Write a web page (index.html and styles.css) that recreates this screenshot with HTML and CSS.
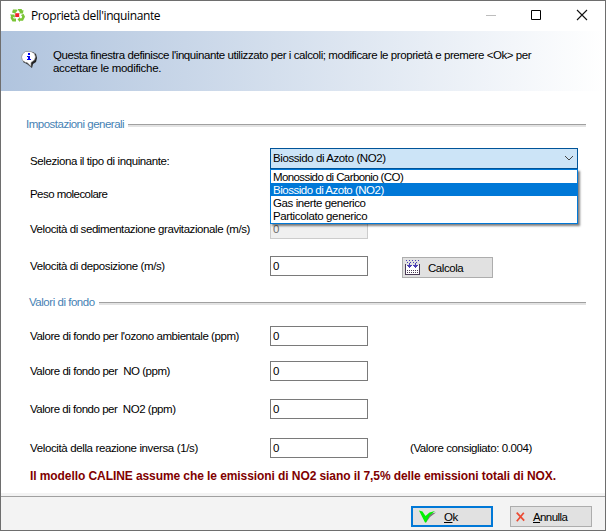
FILE: index.html
```html
<!DOCTYPE html>
<html lang="it">
<head>
<meta charset="utf-8">
<title>Proprietà dell'inquinante</title>
<link rel="stylesheet" href="styles.css">
</head>
<body>
<div class="window">
  <header class="titlebar">
    <svg class="app-icon" width="15" height="13" viewBox="0 0 15 13">
      <g fill="#7ac536">
        <path d="M3 .5h3.500l1 1-2.500 3-3-1zM7.500 0h4l1 1.500 1-.5-.5 3.500h-4l1-1-1.500-2z"/>
        <path d="M0 5.500h4.500l.5 3-1.500-.5-.5 1 1 .5h2v3h-3.500l-2-3.500.5-2z"/>
        <path d="M11 6l2.500-1.200 1.500 3-2 4h-3v1.200l-2.500-2.500 2.500-2.500v1.200h1.500l.7-1.500z"/>
      </g>
      <path fill="#f0222c" d="M5.200 4.200h4v3.800h-4z"/>
    </svg>
    <span class="title">Proprietà dell'inquinante</span>
    <svg class="win-controls" width="104" height="12" viewBox="0 0 104 12" fill="none">
      <path stroke="#bdbdbd" d="M0 6.500h10"/>
      <path stroke="#000" d="M45.500 1.500h9v9h-9z"/>
      <path stroke="#111" stroke-width="1.100" d="M91 1l10 10M101 1l-10 10"/>
    </svg>
  </header>
  <section class="banner">
    <svg class="info-icon" width="16" height="17" viewBox="0 0 16 17">
      <path fill="#222" d="M5 1h7l3 2 1 4-1 4-3 2-1 4-5-4-4-2z"/>
      <path fill="#fff" stroke="#888" stroke-width=".7" d="M4.500.5h5.500l3.500 2 1 3.500-1 3-3.500 2.500v4l-4-4h-1.500l-3-2-1-3.500 1-3z"/>
      <path fill="#0000f0" shape-rendering="crispEdges" d="M7 2h2v2h-2zM6 5h3v3h1v1h-4v-1h1v-2h-1z"/>
    </svg>
    <p class="banner-text"><span class="b1">Questa finestra definisce l'inquinante utilizzato per i calcoli; modificare le proprietà e premere &lt;Ok&gt; per</span><br><span class="b2">accettare le modifiche.</span></p>
  </section>
  <main class="content">
    <h2 class="group"><span class="g1">Impostazioni generali</span></h2>
    <div class="row r-type">
      <label class="l1">Seleziona il tipo di inquinante:</label>
      <div class="combo">
        <span class="s1">Biossido di Azoto (NO2)</span>
        <svg width="10" height="6" viewBox="0 0 10 6" fill="none" stroke="#444"><path d="M1 1l4 4 4-4"/></svg>
        <ul class="options">
          <li><span class="o1">Monossido di Carbonio (CO)</span></li>
          <li class="selected"><span class="o2">Biossido di Azoto (NO2)</span></li>
          <li><span class="o3">Gas inerte generico</span></li>
          <li><span class="o4">Particolato generico</span></li>
        </ul>
      </div>
    </div>
    <div class="row r-weight"><label class="l2">Peso molecolare</label></div>
    <div class="row r-sed"><label class="l3">Velocità di sedimentazione gravitazionale (m/s)</label><div class="field disabled">0</div></div>
    <div class="row r-dep"><label class="l4">Velocità di deposizione (m/s)</label><div class="field">0</div>
      <div class="button calc">
        <svg width="15" height="15" viewBox="0 0 15 15" shape-rendering="crispEdges">
          <path fill="#fff" d="M1 5h13v9h-13z"/>
          <path fill="none" stroke="#4b3a55" d="M.5 4v10.500h14v-10.500"/>
          <path fill="none" stroke="#4b3fb5" stroke-dasharray="1 2" d="M1 .5h13M2 2.500h12"/>
          <path fill="#4b3fb5" d="M4 3h1v2h2v1h-1v1h-1v1h-1v-1h-1v-1h-1v-1h2zM10 3h1v2h2v1h-1v1h-1v1h-1v-1h-1v-1h-1v-1h2z"/>
          <path fill="none" stroke="#4b3a55" stroke-dasharray="1 1" d="M2 10.500h11M2 12.500h11"/>
        </svg>
        <span class="c1">Calcola</span>
      </div>
    </div>
    <h2 class="group second"><span class="g2">Valori di fondo</span></h2>
    <div class="row r-o3"><label class="l5">Valore di fondo per l'ozono ambientale (ppm)</label><div class="field">0</div></div>
    <div class="row r-no"><label class="l6">Valore di fondo per&nbsp; NO (ppm)</label><div class="field">0</div></div>
    <div class="row r-no2"><label class="l7">Valore di fondo per&nbsp; NO2 (ppm)</label><div class="field">0</div></div>
    <div class="row r-inv"><label class="l8">Velocità della reazione inversa (1/s)</label><div class="field">0</div><span class="hint">(Valore consigliato: 0.004)</span></div>
    <p class="notice">Il modello CALINE assume che le emissioni di NO2 siano il 7,5% delle emissioni totali di NOX.</p>
  </main>
  <footer class="footer">
    <div class="button ok">
      <svg width="18" height="13" viewBox="0 0 18 13"><path fill="#777" d="M2 3l5 9.500 4-5.500 6-4.500-5 1-5 4z"/><path fill="#00f000" d="M0 .5l3.500 1 3 4.500 4-3.500 5.500-1.500-5.500 4.500-3.500 7h-1z"/></svg>
      <span class="c2"><u>O</u>k</span>
    </div>
    <div class="button cancel">
      <svg width="9" height="10" viewBox="0 0 9 10" fill="none" stroke="#ec4a32" stroke-width="1.700"><path d="M.7.7l7.500 8M7.800.700l-7 8.500"/></svg>
      <span class="c3"><u>A</u>nnulla</span>
    </div>
  </footer>
</div>
</body>
</html>
```
FILE: styles.css
```css
* { box-sizing: border-box; margin: 0; padding: 0; }
body { font: 11.5px/13px "Liberation Sans", Arial, sans-serif; color: #000; background: #fff; overflow: hidden; }
.window { width: 606px; height: 531px; border: 1px solid #6e6e6e; display: flex; flex-direction: column; white-space: nowrap; }
.titlebar { height: 30px; display: flex; align-items: center; padding: 0 15px 0 9px; }
.app-icon { margin-top: -2px; }
.title { font: 12px/16px "Open Sans", "Noto Sans", sans-serif; letter-spacing: -0.38px; margin: -1px 0 0 6px; flex: 1; }
.win-controls { margin-top: -2px; }
.banner { height: 60px; display: flex; padding: 18px 0 0 20px; background: linear-gradient(90deg, #b0c4de, #fff); }
.info-icon { margin-top: 2px; }
.banner-text { margin-left: 16px; }
.content { height: 402px; padding: 26px 19px 0 25px; display: flex; flex-direction: column; }
.group { height: 14px; font-size: 11.5px; font-weight: normal; color: #4682b4; display: flex; align-items: center; }
.group::after { content: ""; flex: 1; height: 2px; margin: 2px 0 0 4px; border-top: 1px solid #a0a0a0; background: #e3e3e3; }
.row { display: flex; align-items: center; padding-left: 4px; height: 20px; }
.row label { width: 240px; }
.r-type { margin-top: 17px; height: 21px; }
.r-type label { padding-top: 6px; }
.r-weight { margin-top: 15px; }
.r-sed { margin-top: 15px; }
.r-dep { margin-top: 17px; }
.second { margin-top: 19px; padding-left: 3px; }
.r-o3 { margin-top: 17px; }
.r-no { margin-top: 15px; }
.r-no2 { margin-top: 18px; }
.r-inv { margin-top: 19px; }
.combo { position: relative; width: 308px; height: 21px; border: 1px solid #005499; background: #cce4f7; display: flex; align-items: center; justify-content: space-between; padding: 0 3px 1px 2px; }
.options { position: absolute; left: -1px; top: 20px; width: 308px; height: 55px; border: 1px solid #0078d7; background: #fff; list-style: none; box-shadow: 2px 2px 2px rgba(0, 0, 0, .5); }
.options li { height: 13px; padding-left: 2px; line-height: 14px; }
.options .selected { background: #0078d7; color: #fff; }
.field { width: 98px; height: 20px; border: 1px solid #7a7a7a; background: #fff; padding: 3px 0 0 2px; }
.field.disabled { border-color: #ccc; background: #f0f0f0; color: #6d6d6d; }
.button { display: flex; align-items: center; height: 21px; border: 1px solid #adadad; background: #e1e1e1; }
.button span { padding-top: 1px; }
.calc { width: 91px; margin: 3px 0 0 34px; padding-left: 2px; }
.calc span { margin-left: 8px; }
.hint { margin-left: 42px; letter-spacing: -0.4px; }
.notice { margin-top: 12px; padding-left: 4px; font-size: 12px; font-weight: bold; color: #800000; letter-spacing: -0.08px; }
.footer { height: 37px; background: linear-gradient(#a0a0a0, #a0a0a0) 0 3px / 100% 1px no-repeat #f3f3f3; display: flex; justify-content: flex-end; padding: 13px 13px 0 0; }
.ok { width: 82px; border: 2px solid #0078d7; padding-left: 6px; }
.ok span { margin-left: 7px; }
.cancel { width: 82px; margin-left: 17px; padding-left: 5px; }
.cancel span { margin-left: 8px; }

/* Per-string tracking */
.b1 { letter-spacing: -0.42px; }
.l5 { letter-spacing: -0.44px; }
.b2 { letter-spacing: -0.3px; }
.g1 { letter-spacing: -0.5px; }
.g2, .l7 { letter-spacing: -0.47px; }
.l1, .l4 { letter-spacing: -0.4px; }
.l2 { letter-spacing: -0.55px; }
.l3 { letter-spacing: -0.42px; }
.l6 { letter-spacing: -0.455px; }
.l8, .o4 { letter-spacing: -0.37px; }
.s1, .o3 { letter-spacing: -0.41px; }
.o1 { letter-spacing: -0.6px; }
.o2 { letter-spacing: -0.49px; }
.c1, .c2 { letter-spacing: -0.45px; }
.c3 { letter-spacing: -0.6px; }
```
